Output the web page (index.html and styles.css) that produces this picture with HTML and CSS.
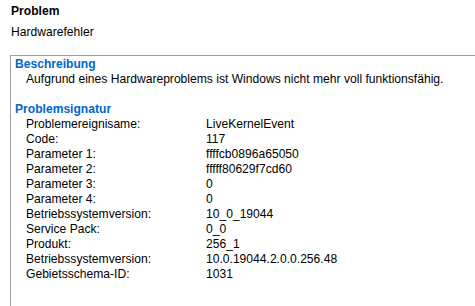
FILE: index.html
```html
<!DOCTYPE html>
<html lang="de">
<head>
    <meta charset="UTF-8">
    <title>Problemdetails</title>
    <link rel="stylesheet" href="styles.css">
</head>
<body>
    <div class="report">
        <div class="title">Problem</div>
        <div class="summary">Hardwarefehler</div>

        <div class="details">
            <div class="section-head">Beschreibung</div>
            <div class="section-text">Aufgrund eines Hardwareproblems ist Windows nicht mehr voll funktionsfähig.</div>

            <div class="section-head spaced">Problemsignatur</div>
            <div class="sig">
                <span>Problemereignisame:</span><span>LiveKernelEvent</span>
                <span>Code:</span><span>117</span>
                <span>Parameter 1:</span><span>ffffcb0896a65050</span>
                <span>Parameter 2:</span><span>fffff80629f7cd60</span>
                <span>Parameter 3:</span><span>0</span>
                <span>Parameter 4:</span><span>0</span>
                <span>Betriebssystemversion:</span><span>10_0_19044</span>
                <span>Service Pack:</span><span>0_0</span>
                <span>Produkt:</span><span>256_1</span>
                <span>Betriebssystemversion:</span><span>10.0.19044.2.0.0.256.48</span>
                <span>Gebietsschema-ID:</span><span>1031</span>
            </div>
        </div>
    </div>
</body>
</html>
```

FILE: styles.css
```css
body, html {
    margin: 0;
    padding: 0;
    height: 100%;
    overflow: hidden;
    background: #fff;
    font-family: 'Liberation Sans', Arial, sans-serif;
    font-size: 12.1px;
    line-height: 15px;
    color: #000;
}
.report {
    padding: 4px 0 0 11px;
}
.title {
    font-weight: bold;
}
.summary {
    margin-top: 6px;
}
.details {
    margin-top: 15px;
    margin-left: -1px;
    border-top: 1px solid #a0a0a0;
    border-left: 1px solid #a0a0a0;
    height: 260px;
    padding: 1px 0 0 4px;
}
.section-head {
    color: #0066cc;
    font-weight: bold;
}
.section-head.spaced {
    margin-top: 15px;
}
.section-text {
    padding-left: 11px;
}
.sig {
    display: grid;
    grid-template-columns: 180px auto;
    padding-left: 11px;
}
```
